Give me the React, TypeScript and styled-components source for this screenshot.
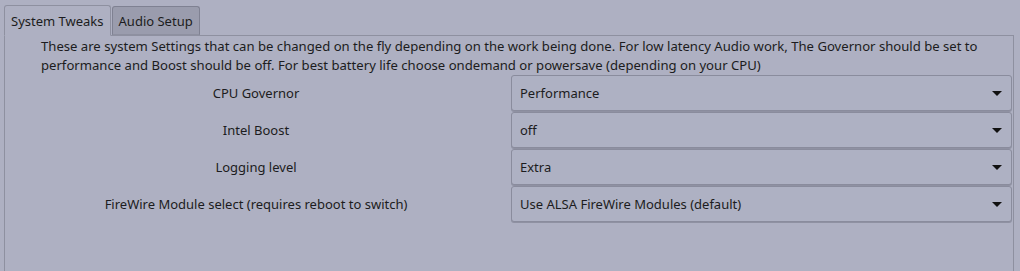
import styled, { createGlobalStyle } from "styled-components"

const GlobalStyle = createGlobalStyle`
  html, body {
    margin: 0;
    padding: 0;
    background: #aeb0c2;
  }
  body {
    font-family: "Noto Sans", "DejaVu Sans", sans-serif;
    font-size: 13px;
    color: #1c1c20;
    overflow: hidden;
  }
`

const Window = styled.div`
  width: 1020px;
  height: 271px;
  display: flex;
  flex-direction: column;
  padding: 5px 6px 0 4px;
  box-sizing: border-box;
`

const TabBar = styled.div`
  display: flex;
  align-items: flex-end;
  height: 30px;
  position: relative;
  z-index: 1;
`

const Tab = styled.div<{ $active?: boolean }>`
  box-sizing: border-box;
  height: ${(p) => (p.$active ? "31px" : "29px")};
  padding: 0 6px 0 6px;
  display: flex;
  align-items: center;
  border: 1px solid ${(p) => (p.$active ? "#8e90a0" : "#7f8192")};
  border-bottom: ${(p) => (p.$active ? "1px solid #aeb0c2" : "1px solid #8e90a0")};
  border-radius: 3px 3px 0 0;
  background: ${(p) => (p.$active ? "#aeb0c2" : "#9a9cad")};
  margin-bottom: ${(p) => (p.$active ? "-1px" : "0")};
  margin-left: ${(p) => (p.$active ? "0" : "1px")};
`

const Panel = styled.div`
  flex: 1;
  border: 1px solid #8e90a0;
  border-bottom: none;
  display: flex;
  flex-direction: column;
`

const Description = styled.p`
  margin: 0;
  padding: 1px 4px 0 36px;
  font-size: 13.12px;
  line-height: 19px;
`

const Form = styled.div`
  display: grid;
  grid-template-columns: 1fr 501px;
  column-gap: 4px;
  row-gap: 1px;
  padding: 0 1px 0 0;
`

const Label = styled.div`
  display: flex;
  align-items: center;
  justify-content: center;
  height: 36px;
`

const Combo = styled.div`
  box-sizing: border-box;
  height: 36px;
  display: flex;
  align-items: center;
  justify-content: space-between;
  padding: 0 9px 0 8px;
  border: 1px solid #8a8c9d;
  border-radius: 3px;
  background: #aeb1c3;
  box-shadow: 0 1px 0 #8f91a2;
`

const Arrow = () => (
  <svg width="10" height="5" viewBox="0 0 10 5">
    <path d="M0 0 H10 L5 5 Z" fill="#111" />
  </svg>
)

const rows = [
  { label: "CPU Governor", value: "Performance" },
  { label: "Intel Boost", value: "off" },
  { label: "Logging level", value: "Extra" },
  { label: "FireWire Module select (requires reboot to switch)", value: "Use ALSA FireWire Modules (default)" },
]

export default function App() {
  return (
    <>
      <GlobalStyle />
      <Window>
        <TabBar>
          <Tab $active>System Tweaks</Tab>
          <Tab>Audio Setup</Tab>
        </TabBar>
        <Panel>
          <Description>
            These are system Settings that can be changed on the fly depending on the work being done. For low latency Audio work, The Governor should be set to performance and Boost should be off. For best battery life choose ondemand or powersave (depending on your CPU)
          </Description>
          <Form>
            {rows.map((row) => (
              <>
                <Label key={row.label}>{row.label}</Label>
                <Combo key={row.value}>
                  <span>{row.value}</span>
                  <Arrow />
                </Combo>
              </>
            ))}
          </Form>
        </Panel>
      </Window>
    </>
  )
}
